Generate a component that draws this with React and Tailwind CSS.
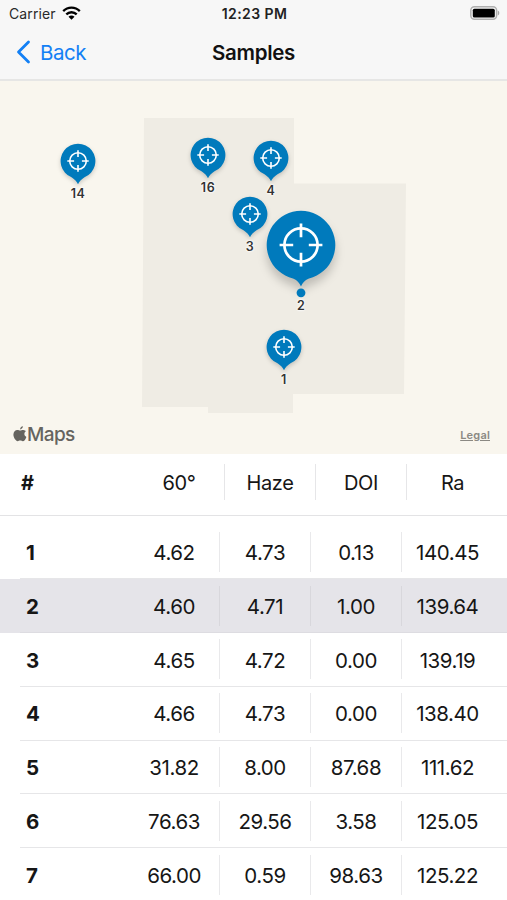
import React from 'react';

const columns = ['60°', 'Haze', 'DOI', 'Ra'];

const samples = [
  { id: 1, values: ['4.62', '4.73', '0.13', '140.45'] },
  { id: 2, values: ['4.60', '4.71', '1.00', '139.64'] },
  { id: 3, values: ['4.65', '4.72', '0.00', '139.19'] },
  { id: 4, values: ['4.66', '4.73', '0.00', '138.40'] },
  { id: 5, values: ['31.82', '8.00', '87.68', '111.62'] },
  { id: 6, values: ['76.63', '29.56', '3.58', '125.05'] },
  { id: 7, values: ['66.00', '0.59', '98.63', '125.22'] },
];

const pins = [
  { id: 14, place: 'left-[58px] top-[62px]' },
  { id: 16, place: 'left-[188px] top-[56px]' },
  { id: 4, place: 'left-[251px] top-[59px]' },
  { id: 3, place: 'left-[230px] top-[115px]' },
  { id: 1, place: 'left-[264px] top-[248px]' },
];

const labelHalo = '[text-shadow:0_0_2px_#fff,0_0_2px_#fff,0_0_3px_#fff]';

const Crosshair = () => (
  <g fill="none" stroke="#fff">
    <circle r="8.3" />
    <path d="M0 -10.7V-3.9M0 10.7V3.9M-10.7 0H-3.9M10.7 0H3.9" />
  </g>
);

const SmallPin = ({ pin }) => (
  <div className={`absolute w-10 flex flex-col items-center ${pin.place}`}>
    <svg className="w-10 h-[43px] [filter:drop-shadow(0_2px_2px_rgba(0,0,0,0.18))]" viewBox="-20 -18 40 43">
      <path
        d="M0 23.2C-1.4 20.4 -3 18.4 -6.5 16.2A17.4 17.4 0 1 1 6.5 16.2C3 18.4 1.4 20.4 0 23.2Z"
        fill="#007abc"
      />
      <g strokeWidth="1.6">
        <Crosshair />
      </g>
    </svg>
    <span className={`mt-px text-[12.5px] leading-[14px] font-semibold tracking-[0.5px] text-[#333] ${labelHalo}`}>{pin.id}</span>
  </div>
);

const SelectedPin = () => (
  <div className="absolute left-[256px] top-[124px] w-[90px] flex flex-col items-center">
    <svg className="w-[90px] h-[94px]" viewBox="-45 -40 90 94">
      <g className="[filter:drop-shadow(0_7px_5px_rgba(0,0,0,0.2))]">
        <path
          d="M0 41.5C-1.6 38 -3.4 35.2 -8 33.4A34.3 34.3 0 1 1 8 33.4C3.4 35.2 1.6 38 0 41.5Z"
          fill="#007abc"
        />
      </g>
      <circle cy="47.8" r="4.4" fill="#007abc" />
      <g transform="scale(2)" strokeWidth="1.35">
        <Crosshair />
      </g>
    </svg>
    <span className={`text-[12.5px] leading-[14px] font-semibold text-[#333] ${labelHalo}`}>2</span>
  </div>
);

const StatusBar = () => (
  <div className="h-[27px] flex items-center justify-between pl-[9px] pr-[7px]">
    <div className="w-[120px] flex items-center gap-1.5 text-[14px] tracking-[0.1px] text-[#2a2a2a]">
      <span>Carrier</span>
      <svg className="w-[19px] h-[14px] -mt-0.5" viewBox="0 0 19 14" fill="none" stroke="#000" strokeWidth="2.3">
        <path d="M1.2 5.1C5.8 0.5 13.2 0.5 17.8 5.1" />
        <path d="M4.3 8.4C7.2 5.5 11.8 5.5 14.7 8.4" />
        <path d="M9.5 13.7L6.5 10.7C8.2 9.1 10.8 9.1 12.5 10.7Z" fill="#000" stroke="none" />
      </svg>
    </div>
    <div className="text-[14px] font-semibold tracking-[0.4px] text-[#222]">12:23 PM</div>
    <div className="w-[120px] flex justify-end -mt-px">
      <svg className="w-[30px] h-[14px]" viewBox="0 0 30 14">
        <rect x="0.8" y="0.8" width="25.8" height="12.4" rx="3.6" fill="#f7f7f7" stroke="#b0b0b0" strokeWidth="1.5" />
        <rect x="2.8" y="2.7" width="22" height="8.8" rx="1.6" fill="#000" />
        <path d="M27.8 4.5C29.8 5.3 29.8 8.7 27.8 9.5Z" fill="#a8a8a8" />
      </svg>
    </div>
  </div>
);

const NavBar = () => (
  <div className="h-[50px] flex items-center px-4">
    <div className="w-[120px] flex items-center gap-[9px] text-[20.5px] tracking-[-0.45px] text-[#1380f5]">
      <svg className="w-[15px] h-6" viewBox="0 0 15 24" fill="none" stroke="currentColor" strokeWidth="2.8" strokeLinecap="round" strokeLinejoin="round">
        <path d="M12.5 2L2.5 12L12.5 22" />
      </svg>
      <span className="pt-[3px]">Back</span>
    </div>
    <h1 className="flex-1 pt-[3px] text-center text-[20.5px] font-semibold tracking-[-0.3px] text-[#111]">Samples</h1>
    <div className="w-[120px]"></div>
  </div>
);

const SampleMap = () => (
  <div className="relative h-[373px] shrink-0 overflow-hidden bg-[#f9f6ee]">
    <svg className="block w-[507px] h-[373px]" viewBox="0 81 507 373">
      <path d="M144 118H294V183.5H406L404 394H293V413H208V407H142Z" fill="#efece4" />
    </svg>
    {pins.map((pin) => (
      <SmallPin key={pin.id} pin={pin} />
    ))}
    <SelectedPin />
    <div className="absolute left-[13px] right-[17px] bottom-[8px] flex items-center justify-between">
      <div className="flex items-center text-[#66645f]">
        <svg className="w-[14px] h-4 -mt-0.5" viewBox="0 0 14 16" fill="currentColor">
          <path d="M9.9 0.3C10 1.8 8.7 3.3 7.1 3.4C7 1.9 8.4 0.5 9.9 0.3Z" />
          <path d="M12.9 5.3C10.7 6.6 11 9.8 13.4 10.9C12.7 12.9 11.3 15.2 9.8 15.2C8.9 15.2 8.4 14.6 7.2 14.6C6 14.6 5.6 15.2 4.7 15.2C2.8 15.2 0.4 11.7 0.4 8.6C0.4 5.5 2.3 3.9 4.3 3.9C5.5 3.9 6.4 4.6 7.2 4.6C8 4.6 9 3.8 10.4 3.9C11.5 4 12.4 4.5 12.9 5.3Z" />
        </svg>
        <span className="text-[19px] leading-[23px] font-medium tracking-[-0.6px]">Maps</span>
      </div>
      <span className="text-[11px] leading-[14px] font-semibold tracking-[0.2px] text-[#8b8983] underline">Legal</span>
    </div>
  </div>
);

const TableHeader = () => (
  <div className="h-[62px] shrink-0 flex items-start pt-[10px] pl-[21px] border-b border-[#e3e3e5] text-[20px] tracking-[-0.4px]">
    <div className="w-[113px] h-9 pt-0.5 flex items-center font-bold">#</div>
    {columns.map((name) => (
      <div key={name} className="w-[91px] h-9 pt-0.5 flex items-center justify-center border-r border-[#e6e6e8] last:border-r-0">
        {name}
      </div>
    ))}
  </div>
);

const SampleRow = ({ sample, selected }) => (
  <div className={`h-[53.8px] shrink-0 pl-5 ${selected ? 'bg-[#e5e4e9]' : ''}`}>
    <div className={`h-full flex items-center border-b text-[20.5px] tracking-[-0.45px] ${selected ? 'border-[#dddce1]' : 'border-[#e6e6e8]'}`}>
      <div className="w-[109px] h-10 pt-[3px] pl-1.5 flex items-center font-bold">{sample.id}</div>
      {sample.values.map((value, i) => (
        <div
          key={i}
          className={`w-[91px] h-10 pt-[3px] flex items-center justify-center border-r last:border-r-0 ${selected ? 'border-[#d8d7dc]' : 'border-[#e9e9eb]'}`}
        >
          {value}
        </div>
      ))}
    </div>
  </div>
);

const App = () => {
  const selectedId = 2;

  return (
    <div className="w-[507px] h-[900px] flex flex-col overflow-hidden bg-white text-[#161616] font-['Inter','Liberation_Sans',sans-serif]">
      <header className="h-[81px] shrink-0 bg-[#f7f7f7] border-b-2 border-[#e6e6e5]">
        <StatusBar />
        <NavBar />
      </header>
      <SampleMap />
      <TableHeader />
      <div className="flex-1 min-h-0 overflow-hidden flex flex-col pt-[9.5px]">
        {samples.map((sample) => (
          <SampleRow key={sample.id} sample={sample} selected={sample.id === selectedId} />
        ))}
      </div>
    </div>
  );
};

export default App;
